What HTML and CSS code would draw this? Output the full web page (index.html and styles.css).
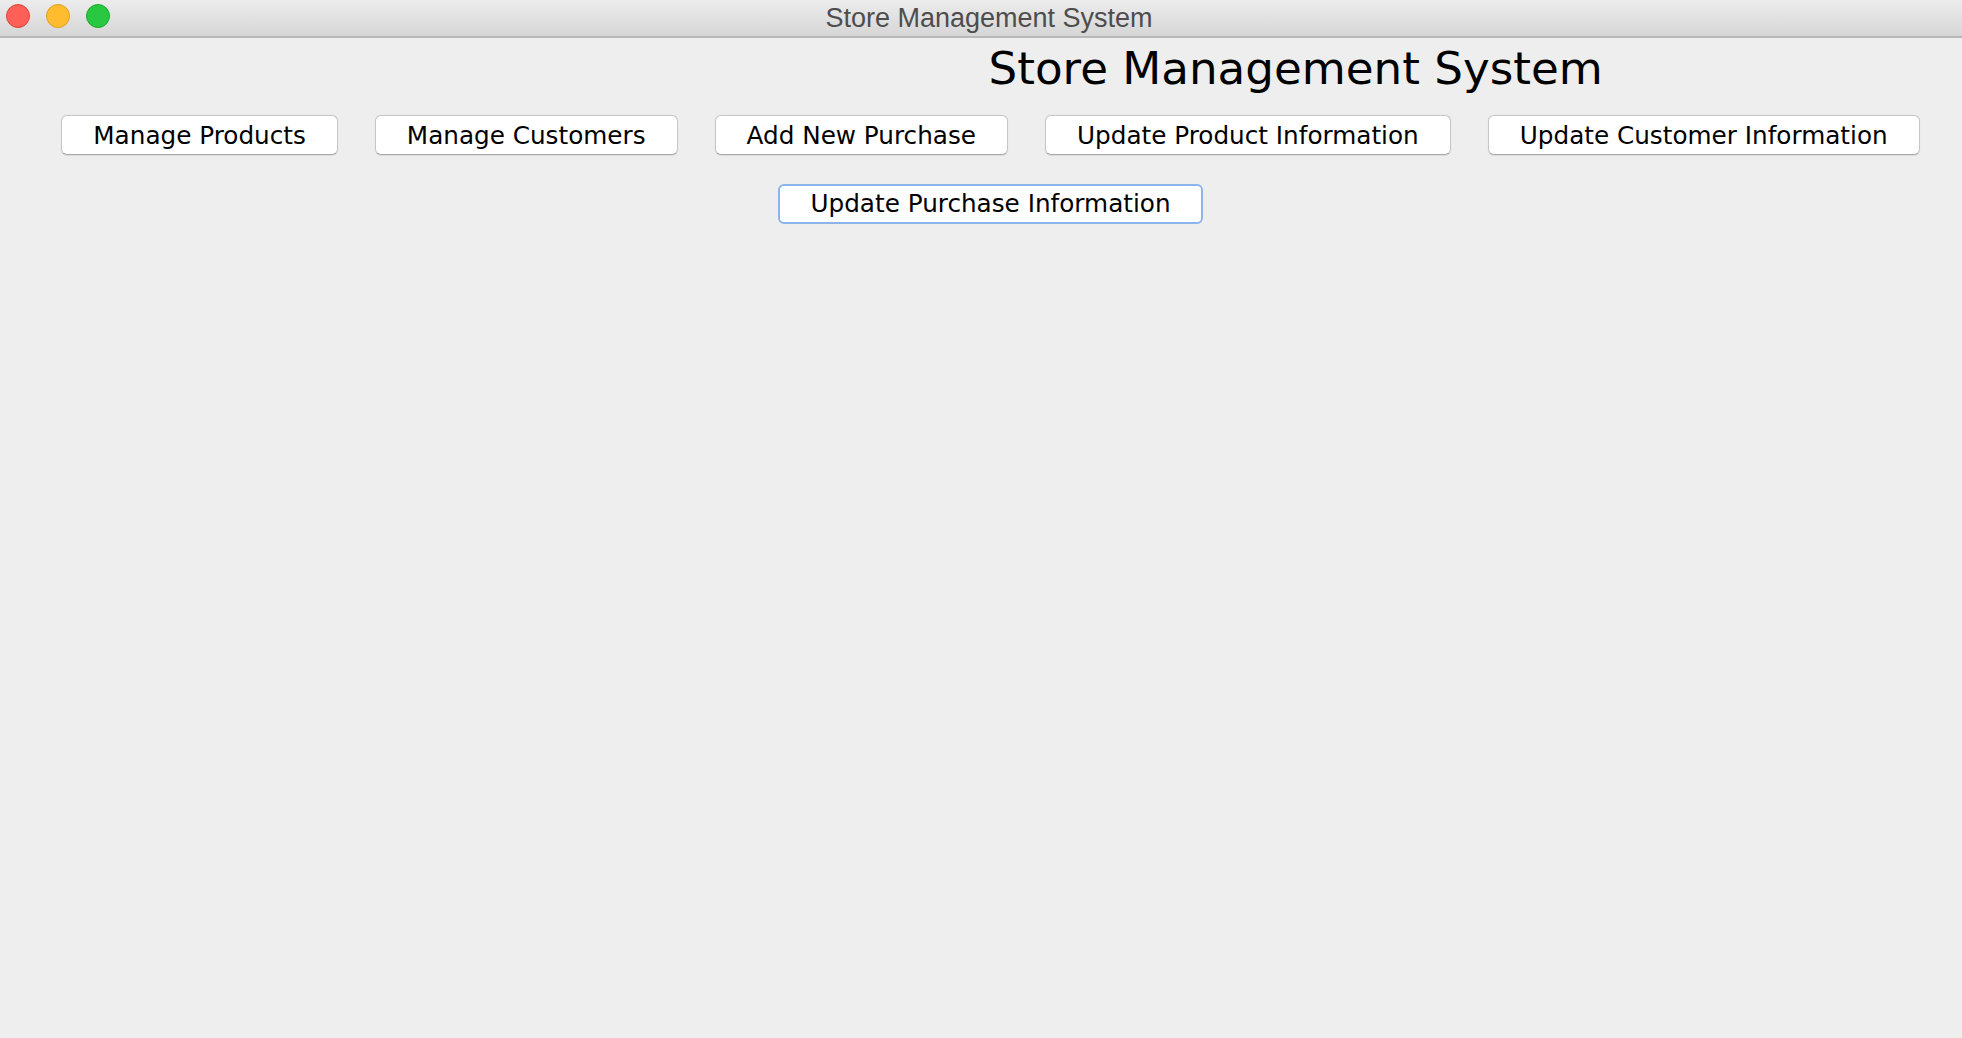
FILE: index.html
```html
<!DOCTYPE html>
<html>
<head>
<meta charset="utf-8">
<title>Store Management System</title>
<link rel="stylesheet" href="styles.css">
</head>
<body>
<div class="window">
  <div class="titlebar">
    <div class="lights">
      <span class="light red"></span>
      <span class="light yellow"></span>
      <span class="light green"></span>
    </div>
    <div class="title">Store Management System</div>
  </div>
  <div class="content">
    <div class="header">
      <div class="spacer"></div>
      <h1 class="heading">Store Management System</h1>
    </div>
    <div class="row row-first">
      <button class="btn">Manage Products</button>
      <button class="btn">Manage Customers</button>
      <button class="btn">Add New Purchase</button>
      <button class="btn">Update Product Information</button>
      <button class="btn">Update Customer Information</button>
    </div>
    <div class="row row-second">
      <button class="btn btn-focus">Update Purchase Information</button>
    </div>
  </div>
</div>
</body>
</html>
```

FILE: styles.css
```css
html, body {
  margin: 0;
  padding: 0;
  background: #eeeeee;
}

.window {
  width: 1962px;
  height: 1038px;
  background: #eeeeee;
  overflow: hidden;
}

.titlebar {
  position: relative;
  height: 36px;
  background: linear-gradient(#ececec, #d6d6d6);
  border-bottom: 2px solid #b8b8b8;
  box-sizing: content-box;
}

.lights {
  position: absolute;
  left: 6px;
  top: 4px;
  display: flex;
  gap: 16px;
}

.light {
  width: 22px;
  height: 22px;
  border-radius: 50%;
  border: 1px solid transparent;
}

.red { background: #fe5f57; border-color: #e0443e; }
.yellow { background: #febc2e; border-color: #dea123; }
.green { background: #28c840; border-color: #1aab29; }

.title {
  text-align: center;
  padding-left: 16px;
  font-family: "Liberation Sans", Arial, sans-serif;
  font-size: 27px;
  line-height: 36px;
  color: #4d4d4d;
}

.content {
  padding-left: 19px;
}

.header {
  display: grid;
  grid-template-columns: 1fr 1fr;
  margin-top: 4px;
}

.heading {
  margin: 0 0 0 -2px;
  font-family: "DejaVu Sans", sans-serif;
  font-weight: normal;
  font-size: 45.2px;
  line-height: 53px;
  color: #000;
  white-space: nowrap;
}

.row {
  display: flex;
  justify-content: center;
  gap: 37px;
}

.row-first {
  margin-top: 20px;
}

.row-second {
  margin-top: 29px;
}

.btn {
  font-family: "DejaVu Sans", sans-serif;
  font-size: 24.7px;
  color: #000;
  background: #ffffff;
  border: 1px solid #c6c6c6;
  border-bottom-color: #a9a9a9;
  border-radius: 6px;
  height: 40px;
  box-sizing: border-box;
  padding: 1px 31px 0;
  line-height: 36px;
  white-space: nowrap;
  box-shadow: 0 0.5px 1px rgba(0, 0, 0, 0.08);
  margin: 0;
}

.btn-focus {
  border: 2px solid #8cb3ea;
  padding: 0 30px;
  line-height: 36px;
  box-shadow: none;
}
```
